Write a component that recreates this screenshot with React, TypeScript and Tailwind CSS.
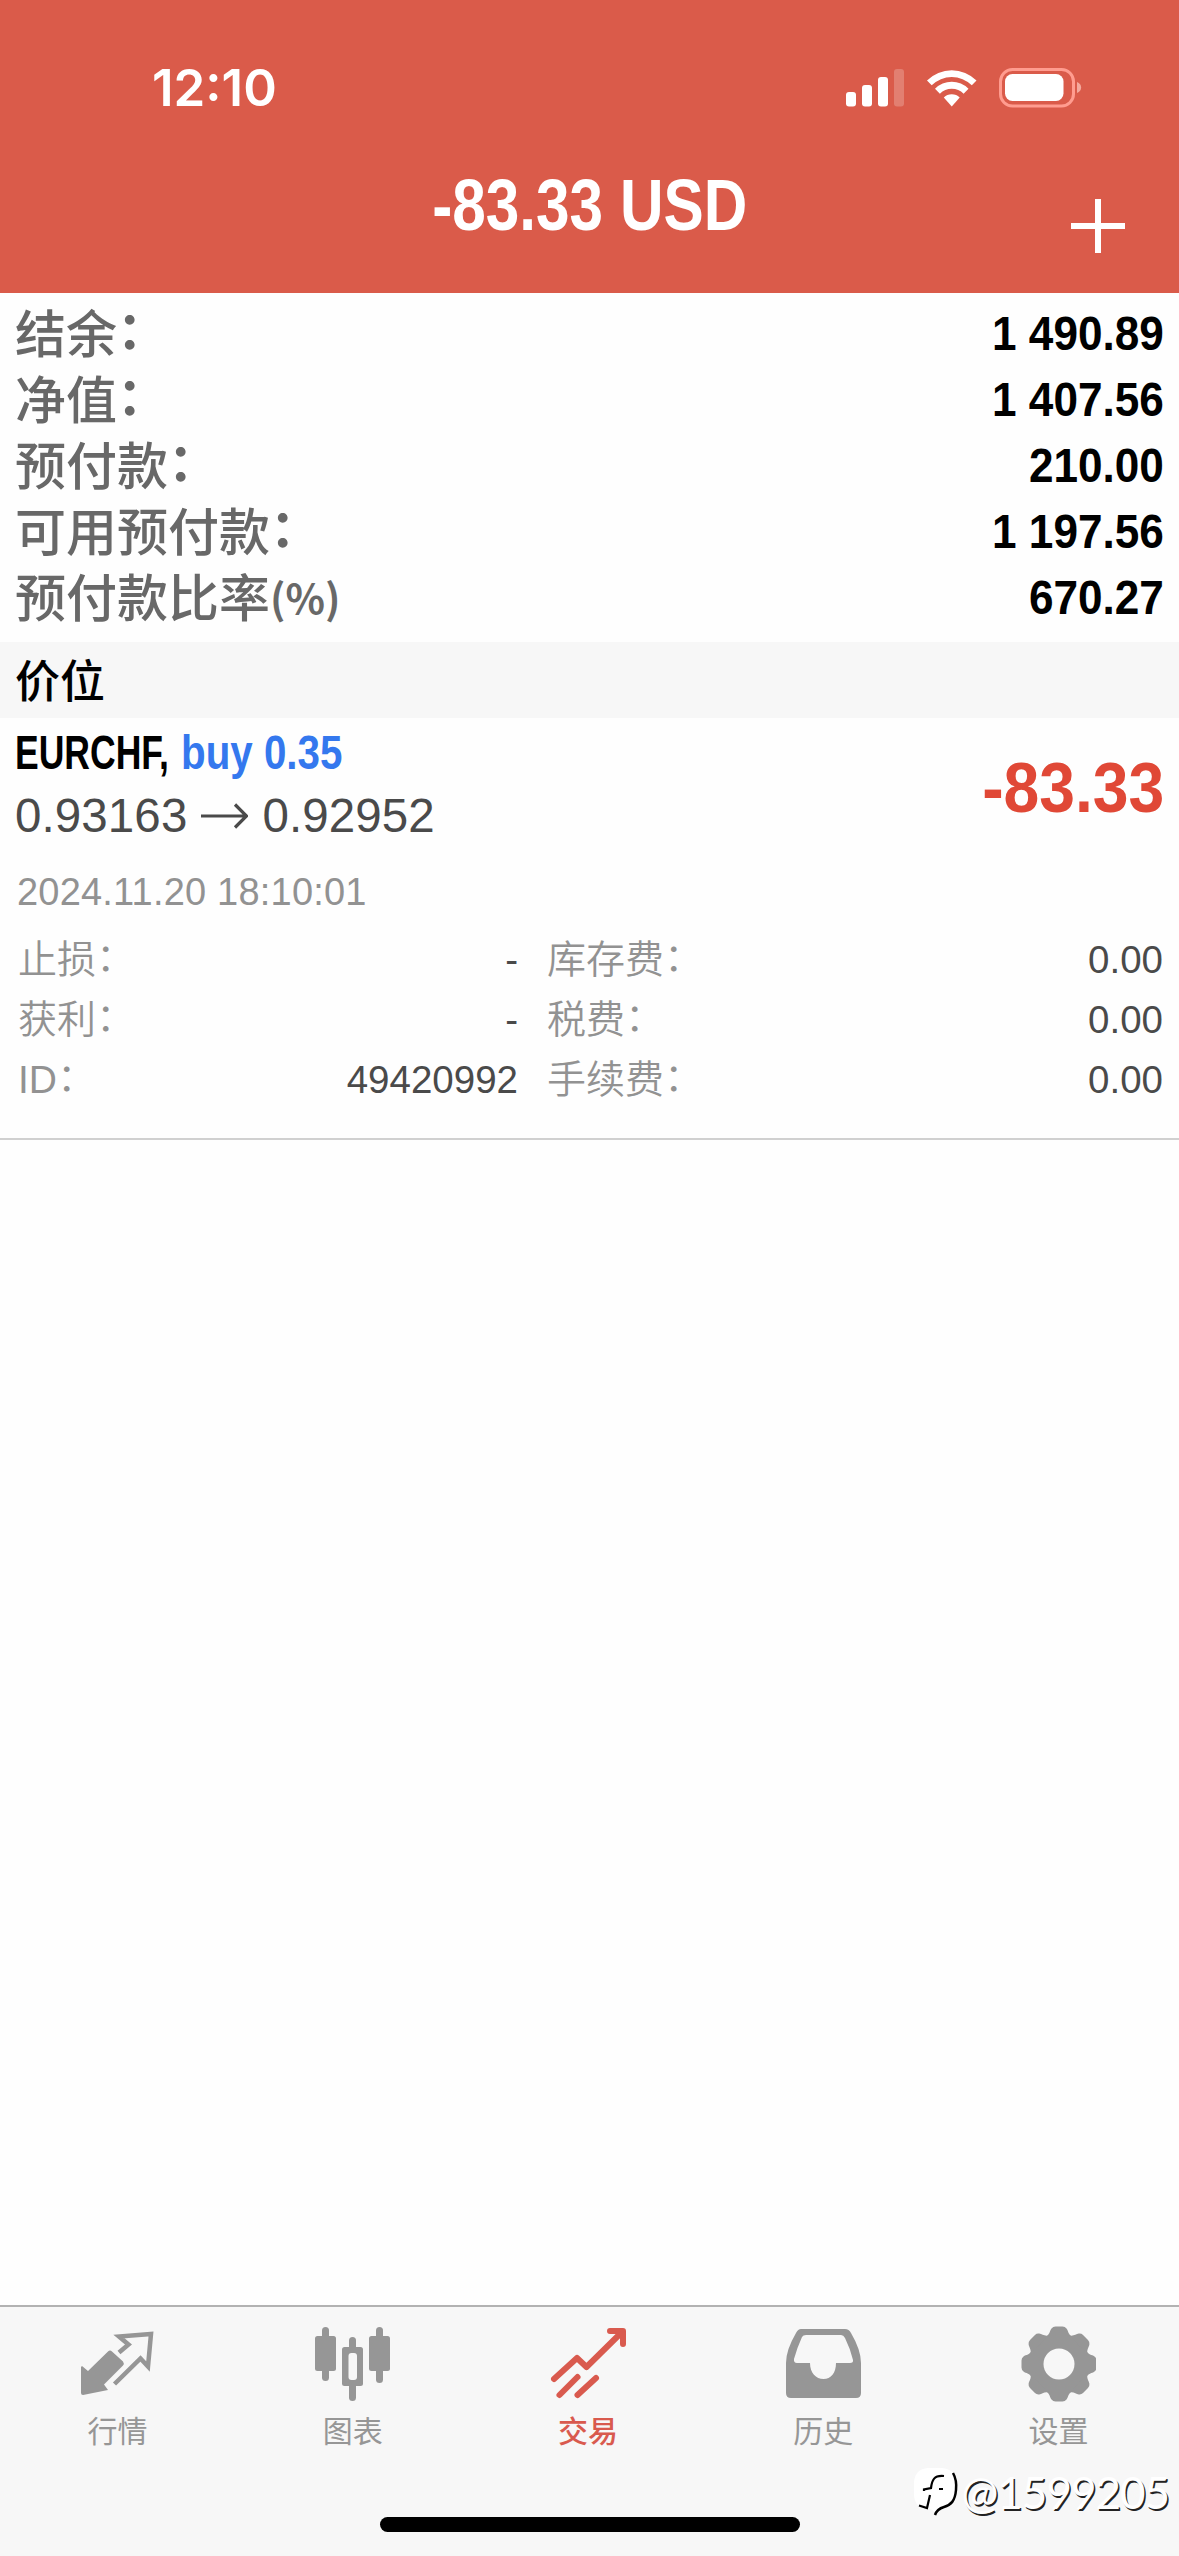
import React from 'react';

interface SummaryRow {
  label: string;
  value: string;
  /**
   * 标签后缀（冒号或单位）
   */
  suffix?: string;
}

interface TabItem {
  label: string;
  icon: React.ReactNode;
  active?: boolean;
}

// 账户汇总数据
const summary: SummaryRow[] = [
  { label: '结余', value: '1 490.89' },
  { label: '净值', value: '1 407.56' },
  { label: '预付款', value: '210.00' },
  { label: '可用预付款', value: '1 197.56' },
  { label: '预付款比率', value: '670.27', suffix: '(%)' },
];

// 持仓明细：左右两列
const detailsLeft: SummaryRow[] = [
  { label: '止损', value: '-' },
  { label: '获利', value: '-' },
  { label: 'ID', value: '49420992' },
];

const detailsRight: SummaryRow[] = [
  { label: '库存费', value: '0.00' },
  { label: '税费', value: '0.00' },
  { label: '手续费', value: '0.00' },
];

const StatusIcons: React.FC = () => (
  <svg width="236" height="40" viewBox="846 68 236 40" fill="#fff">
    {/* 信号 */}
    <rect x="846" y="92" width="10" height="14.5" rx="3" />
    <rect x="862" y="85" width="10" height="21.5" rx="3" />
    <rect x="878" y="77" width="10" height="29.5" rx="3" />
    <rect x="894" y="69" width="10" height="37.5" rx="3" opacity="0.22" />
    {/* Wi-Fi */}
    <path d="M927 80.5 A35 35 0 0 1 976.5 80.5 L971.8 85.3 A28.5 28.5 0 0 0 931.7 85.3 Z" />
    <path d="M935 88.7 A23.5 23.5 0 0 1 968.5 88.7 L963.6 93.7 A16.5 16.5 0 0 0 939.9 93.7 Z" />
    <path d="M943.8 97.5 A11.5 11.5 0 0 1 959.7 97.5 L951.75 106.5 Z" />
    {/* 电池 */}
    <rect x="1000.5" y="69.5" width="73" height="36.5" rx="12" fill="none" stroke="#ff9c8f" strokeWidth="3" />
    <rect x="1005" y="74" width="58.5" height="27" rx="7.5" />
    <path d="M1077 82 C1082.5 84 1082.5 91 1077 93 Z" fill="#f4a99d" />
  </svg>
);

const QuotesIcon: React.FC = () => (
  <svg width="76" height="76" viewBox="80 2326 76 76">
    <path
      d="M82 2366 L88 2371 L108 2351.5 Q110 2349.5 112 2351.5 L123 2361.5 Q124.5 2363.5 123 2365.5 L104 2384.5 L108 2390 L83 2395 Q81 2395 81 2393 V2367 Z"
      fill="#969696"
    />
    <path
      d="M119 2352.5 L128.5 2344.5 L119 2336.5 L151 2334 L148 2366.5 L140.5 2358.5 L114.5 2384"
      fill="none"
      stroke="#969696"
      strokeWidth="4.5"
    />
  </svg>
);

const ChartIcon: React.FC = () => (
  <svg width="76" height="76" viewBox="315 2325 76 76" fill="#969696">
    <rect x="322" y="2326" width="7" height="54" rx="3.5" />
    <rect x="315" y="2335" width="21" height="35" rx="2.5" />
    <rect x="376" y="2326" width="7" height="56" rx="3.5" />
    <rect x="369" y="2335" width="21" height="35" rx="2.5" />
    <rect x="349" y="2336" width="7" height="64" rx="3.5" />
    <rect x="342" y="2346" width="21" height="39" rx="2.5" />
    <rect x="348.5" y="2352" width="8.5" height="27" rx="3" fill="#f7f7f7" />
  </svg>
);

const TradeIcon: React.FC = () => (
  <svg
    width="76"
    height="76"
    viewBox="550 2326 76 76"
    fill="none"
    stroke="#d95a4e"
    strokeWidth="6"
    strokeLinecap="round"
    strokeLinejoin="round"
  >
    <path d="M554 2379 L577 2358 L586.5 2367 L622 2332" />
    <path d="M610 2331 H623 V2344" />
    <path d="M559.5 2395 L577.5 2377" />
    <path d="M577.5 2395 L596 2378" />
  </svg>
);

const HistoryIcon: React.FC = () => (
  <svg width="76" height="76" viewBox="785 2326 76 76" fill="#969696">
    <path
      fillRule="evenodd"
      d="M801 2329 H845 Q849 2329 851 2333 Q861 2350 861 2363 V2393 Q861 2398 856 2398 H791 Q786 2398 786 2393 V2363 Q786 2350 796 2333 Q798 2329 801 2329 Z M806 2335 Q803 2335 802 2337 Q797 2348 794 2359 Q793.5 2363 797 2363 H810 C810 2373 816 2379 823.5 2379 C831 2379 836 2373 836 2363 H850 Q853.5 2363 853 2360 Q850 2348 845 2338 Q843.5 2335 841 2335 Z"
    />
  </svg>
);

const GearIcon: React.FC = () => (
  <svg width="76" height="76" viewBox="-39 -38 76 76">
    <g fill="#969696">
      <circle r="29.5" />
      {[0, 45, 90, 135, 180, 225, 270, 315].map((angle) => (
        <path
          key={angle}
          transform={`rotate(${angle})`}
          d="M-14 -27 C-9 -29 -9.5 -33 -7.5 -35.5 Q-6 -37.5 -3.5 -37.5 H3.5 Q6 -37.5 7.5 -35.5 C9.5 -33 9 -29 14 -27 Z"
        />
      ))}
    </g>
    <circle r="15.5" fill="#f7f7f7" />
  </svg>
);

const tabs: TabItem[] = [
  { label: '行情', icon: <QuotesIcon /> },
  { label: '图表', icon: <ChartIcon /> },
  { label: '交易', icon: <TradeIcon />, active: true },
  { label: '历史', icon: <HistoryIcon /> },
  { label: '设置', icon: <GearIcon /> },
];

const DetailLine: React.FC<SummaryRow> = ({ label, value }) => (
  <div className="flex h-[60px] items-center justify-between">
    <span className="text-[39px] leading-[60px] font-[350] text-[#929292]">
      {label}
      <span className="relative -top-[2px]">：</span>
    </span>
    <span className="text-[38.5px] leading-[60px] text-[#4a4a4a]">{value}</span>
  </div>
);

const App: React.FC = () => {
  return (
    <div className="flex h-[2556px] w-[1179px] flex-col overflow-hidden bg-[#fefefe] font-['Liberation_Sans','Noto_Sans_CJK_SC',sans-serif]">
      {/* 顶部标题栏 */}
      <header className="flex h-[293px] flex-col bg-[#da5b4a] text-white">
        <div className="flex h-[150px] items-start justify-between pt-[68px] pr-[97px] pl-[152px]">
          <span className="font-['Inter',sans-serif] text-[51px] leading-[40px] font-semibold">12:10</span>
          <StatusIcons />
        </div>
        <div className="grid grid-cols-[1fr_auto_1fr] items-start">
          <span />
          <h1 className="scale-x-[.826] pt-[18px] text-[73px] leading-[74px] font-bold">-83.33 USD</h1>
          <button className="mt-[49px] mr-[54px] justify-self-end" aria-label="新建订单">
            <svg width="54" height="54" viewBox="0 0 54 54" fill="none" stroke="#fff" strokeWidth="6">
              <path d="M27 0 V54 M0 27 H54" />
            </svg>
          </button>
        </div>
      </header>

      {/* 账户汇总 */}
      <section className="h-[349px] pt-[7px] pr-[15px] pl-[15px]">
        {summary.map((row) => (
          <div key={row.label} className="flex h-[66px] items-center justify-between">
            <span className="flex items-center pt-[6px] text-[51px] leading-[60px] font-medium text-[#686868]">
              {row.label}
              {row.suffix ? (
                <span className="pb-[8px] font-['Noto_Sans_CJK_SC',sans-serif] text-[41px] leading-[52px] font-bold">
                  {row.suffix}
                </span>
              ) : (
                <span className="relative -top-[4px] font-bold">：</span>
              )}
            </span>
            <span className="origin-right scale-x-90 text-[49px] leading-[66px] font-bold text-black">{row.value}</span>
          </div>
        ))}
      </section>

      {/* 价位分组标题 */}
      <h2 className="h-[76px] bg-[#f7f7f7] pl-[15px] font-['Noto_Sans_CJK_SC',sans-serif] text-[45px] leading-[74px] font-medium text-black">
        价位
      </h2>

      {/* 持仓 */}
      <section className="h-[422px] border-b-2 border-[#d0d0d0]">
        <div className="flex justify-between pr-[15px] pl-[15px]">
          <div>
            <div className="flex h-[70px] items-center text-[48px] leading-[72px] font-bold">
              <span className="w-[166px] origin-left scale-x-[.74] whitespace-nowrap text-black">EURCHF,</span>
              <span className="origin-left scale-x-[.84] whitespace-nowrap text-[#3478ee]">buy 0.35</span>
            </div>
            <div className="flex h-[56px] items-center gap-[14px] text-[47.5px] leading-[56px] tracking-[0.1px] text-[#4a4a4a]">
              <span>0.93163</span>
              <svg width="47" height="26" viewBox="0 0 47 26" fill="none" stroke="#4a4a4a" strokeWidth="3.2">
                <path d="M0 13 H45 M34 1.5 L45.5 13 L34 24.5" />
              </svg>
              <span>0.92952</span>
            </div>
          </div>
          <span className="h-[140px] origin-right scale-x-[.905] text-[71px] leading-[140px] font-bold text-[#e04836]">
            -83.33
          </span>
        </div>
        <div className="pt-[14px] pl-[17px] text-[38px] leading-[40px] tracking-[0.2px] text-[#929292]">
          2024.11.20 18:10:01
        </div>
        <div className="grid grid-cols-[500px_616px] gap-[29px] pt-[18px] pl-[18px]">
          <div>
            {detailsLeft.map((row) => (
              <DetailLine key={row.label} {...row} />
            ))}
          </div>
          <div>
            {detailsRight.map((row) => (
              <DetailLine key={row.label} {...row} />
            ))}
          </div>
        </div>
      </section>

      <div className="flex-1" />

      {/* 底部导航 */}
      <footer className="relative flex h-[251px] flex-col items-center border-t-2 border-[#b2b2b2] bg-[#f7f7f7]">
        <nav className="grid w-full grid-cols-5 pr-[3px]">
          {tabs.map((tab) => (
            <div key={tab.label} className="flex flex-col items-center pt-[19px]">
              {tab.icon}
              <span
                className={`mt-[5px] font-['Noto_Sans_CJK_SC',sans-serif] text-[30px] leading-[44px] ${
                  tab.active ? 'font-medium text-[#d95a4e]' : 'text-[#969696]'
                }`}
              >
                {tab.label}
              </span>
            </div>
          ))}
        </nav>
        <div className="mt-[66px] h-[15px] w-[420px] rounded-full bg-black" />

        {/* 水印 */}
        <div className="absolute right-[10px] bottom-[38px] flex items-center gap-[2px]">
          <svg width="46" height="50" viewBox="0 0 46 50">
            <path
              d="M14 0 H28 Q42 1 42 16 V26 Q42 38 32 40 Q24 42 21 46 Q20 41 14 41 Q0 40 0 26 V14 Q1 1 14 0 Z"
              fill="#fff"
            />
            <path d="M39 5 Q43 12 42 22 C41 33 37 37 30 39 Q23 41 21 47" fill="none" stroke="#000" strokeWidth="2.5" />
            <path
              d="M30 8 C20 7 18 12 17 20 L10 21.5 V23 M16 27 L13 40 L5 37.5 M25 21 H29"
              fill="none"
              stroke="#000"
              strokeWidth="2.2"
            />
          </svg>
          <span className="pb-[2px] font-['Lato',sans-serif] text-[44px] leading-[48px] tracking-[-1px] text-white [text-shadow:1.5px_1.5px_0.5px_#222]">
            @1599205
          </span>
        </div>
      </footer>
    </div>
  );
};

export default App;
